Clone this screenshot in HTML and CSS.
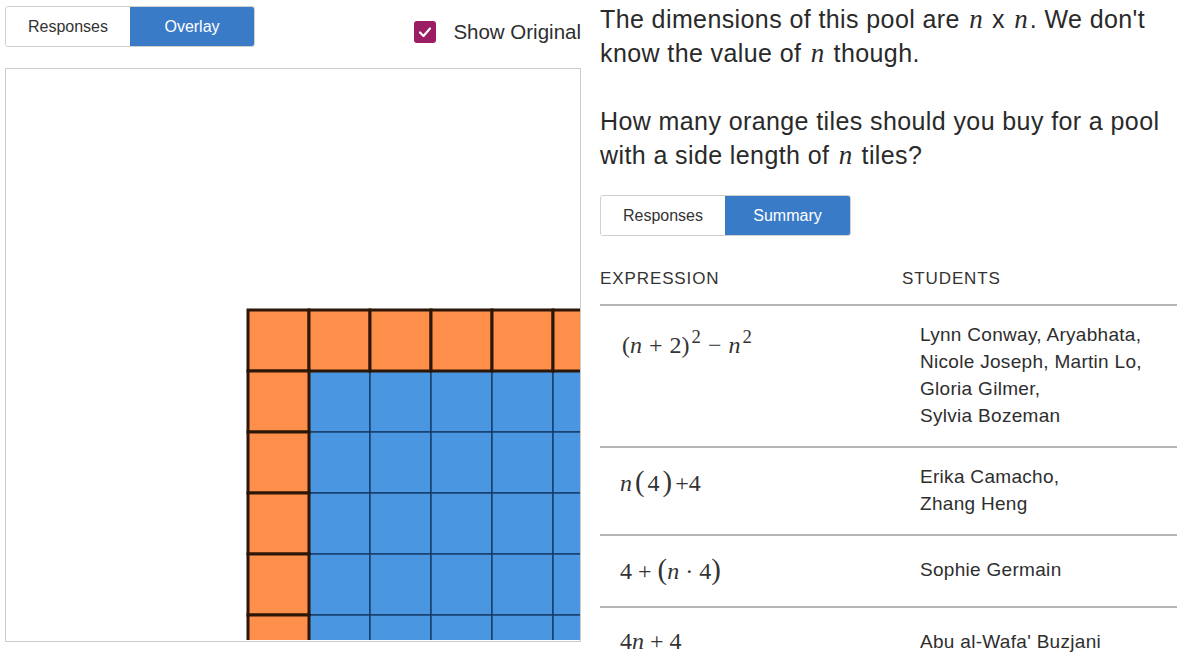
FILE: index.html
```html
<!DOCTYPE html>
<html lang="en">
<head>
<meta charset="utf-8">
<title>Pool tiles summary</title>
<link rel="stylesheet" href="styles.css">
</head>
<body>
<div class="page">
  <section class="left">
    <div class="toolbar">
      <div class="seg">
        <span class="seg-btn">Responses</span>
        <span class="seg-btn active">Overlay</span>
      </div>
      <label class="check">
        <svg class="check-box" width="22" height="22" viewBox="0 0 22 22"><rect x="0" y="0" width="22" height="22" rx="3" fill="#9b1d64"/><polyline points="6,11.5 9.5,15 16,7.5" fill="none" stroke="#fff" stroke-width="2.2" stroke-linecap="round" stroke-linejoin="round"/></svg>
        <span class="check-label">Show Original</span>
      </label>
    </div>
    <div class="canvas">
      <svg class="tiles" width="574" height="571" viewBox="0 0 574 571">
        <g class="blue" fill="#4a96e0" stroke="#163c68" stroke-width="1.4">
          <rect x="303" y="302" width="61" height="61"/><rect x="364" y="302" width="61" height="61"/><rect x="425" y="302" width="61" height="61"/><rect x="486" y="302" width="61" height="61"/><rect x="547" y="302" width="61" height="61"/>
          <rect x="303" y="363" width="61" height="61"/><rect x="364" y="363" width="61" height="61"/><rect x="425" y="363" width="61" height="61"/><rect x="486" y="363" width="61" height="61"/><rect x="547" y="363" width="61" height="61"/>
          <rect x="303" y="424" width="61" height="61"/><rect x="364" y="424" width="61" height="61"/><rect x="425" y="424" width="61" height="61"/><rect x="486" y="424" width="61" height="61"/><rect x="547" y="424" width="61" height="61"/>
          <rect x="303" y="485" width="61" height="61"/><rect x="364" y="485" width="61" height="61"/><rect x="425" y="485" width="61" height="61"/><rect x="486" y="485" width="61" height="61"/><rect x="547" y="485" width="61" height="61"/>
          <rect x="303" y="546" width="61" height="61"/><rect x="364" y="546" width="61" height="61"/><rect x="425" y="546" width="61" height="61"/><rect x="486" y="546" width="61" height="61"/><rect x="547" y="546" width="61" height="61"/>
        </g>
        <g class="orange" fill="#fd8f4b" stroke="#2b1607" stroke-width="3">
          <rect x="242" y="241" width="61" height="61"/><rect x="303" y="241" width="61" height="61"/><rect x="364" y="241" width="61" height="61"/><rect x="425" y="241" width="61" height="61"/><rect x="486" y="241" width="61" height="61"/><rect x="547" y="241" width="61" height="61"/>
          <rect x="242" y="302" width="61" height="61"/><rect x="242" y="363" width="61" height="61"/><rect x="242" y="424" width="61" height="61"/><rect x="242" y="485" width="61" height="61"/><rect x="242" y="546" width="61" height="61"/>
        </g>
      </svg>
    </div>
  </section>

  <section class="right">
    <p class="prompt">The dimensions of this pool are <span class="mi">n</span> x <span class="mi">n</span>. We don't know the value of <span class="mi">n</span> though.</p>
    <p class="prompt">How many orange tiles should you buy for a pool with a side length of <span class="mi">n</span> tiles?</p>

    <div class="seg seg-right">
      <span class="seg-btn">Responses</span>
      <span class="seg-btn active">Summary</span>
    </div>

    <div class="summary">
      <div class="sum-row sum-head">
        <div class="col-expr">EXPRESSION</div>
        <div class="col-students">STUDENTS</div>
      </div>
      <div class="sum-row">
        <div class="expr expr-sup">(<span class="mi">n</span><span class="op">+</span>2)<sup>2</sup><span class="op">−</span><span class="mi">n</span><sup>2</sup></div>
        <div class="names">Lynn Conway, Aryabhata,<br>Nicole Joseph, Martin Lo,<br>Gloria Gilmer,<br>Sylvia Bozeman</div>
      </div>
      <div class="sum-row">
        <div class="expr expr-paren"><span class="mi">n</span><span class="big">(</span>4<span class="big">)</span>+4</div>
        <div class="names">Erika Camacho,<br>Zhang Heng</div>
      </div>
      <div class="sum-row sum-single">
        <div class="expr expr-mid">4<span class="op">+</span><span class="big">(</span><span class="mi">n</span><span class="op">·</span>4<span class="big">)</span></div>
        <div class="names">Sophie Germain</div>
      </div>
      <div class="sum-row sum-single sum-last">
        <div class="expr expr-mid">4<span class="mi">n</span><span class="op">+</span>4</div>
        <div class="names">Abu al-Wafa' Buzjani</div>
      </div>
    </div>
  </section>
</div>
</body>
</html>
```

FILE: styles.css
```css
* { box-sizing: border-box; }

html, body {
  margin: 0;
  padding: 0;
  background: #fff;
  overflow: hidden;
}

body {
  font-family: "Liberation Sans", Arial, sans-serif;
  color: #2e2e2e;
  width: 1200px;
  height: 666px;
}

.page {
  display: flex;
  padding-left: 5px;
}

/* left panel */
.left {
  width: 576px;
  flex: none;
  display: flex;
  flex-direction: column;
}

.toolbar {
  display: flex;
  justify-content: space-between;
  align-items: flex-start;
  padding-top: 6px;
  height: 68px;
}

.seg {
  display: flex;
  height: 41px;
  border: 1px solid #cfcfcf;
  border-radius: 3px;
  overflow: hidden;
  width: 250px;
}

.seg-btn {
  flex: 1;
  display: flex;
  align-items: center;
  justify-content: center;
  font-size: 16px;
  color: #333;
  background: #fff;
}

.seg-btn.active {
  background: #3a7bc8;
  color: #fff;
}

.seg-btn:first-child { flex: 0 0 124px; }

.check {
  display: flex;
  align-items: center;
  gap: 17px;
  margin-top: 14px;
  margin-right: 0;
}

.check-box { display: block; flex: none; }

.check-label {
  font-size: 20.5px;
  color: #2e2e2e;
}

.canvas {
  width: 576px;
  height: 574px;
  border: 1px solid #cccccc;
  overflow: hidden;
}

.tiles { display: block; }

/* right panel */
.right {
  width: 577px;
  margin-left: 19px;
  flex: none;
}

.prompt {
  margin: 2px 0 34px;
  font-size: 25px;
  letter-spacing: 0.4px;
  line-height: 34px;
  color: #2a2a2a;
}

.prompt + .prompt { margin-bottom: 23px; }

.mi {
  font-family: "Liberation Serif", "Times New Roman", serif;
  font-style: italic;
  font-size: 1.08em;
}

.prompt .mi { margin: 0 2px; letter-spacing: 0; }

.seg-right { width: 251px; }
.seg-right .seg-btn:first-child { flex: 0 0 124px; }

.summary {
  margin-top: 31px;
}

.sum-row {
  display: grid;
  grid-template-columns: 302px 1fr;
  border-bottom: 2px solid #b5b5b5;
  padding: 15px 0 17px;
}

.sum-head {
  padding: 0 0 13px;
  font-size: 17px;
  letter-spacing: 0.9px;
  color: #333;
  line-height: 24px;
}

.names {
  padding-left: 18px;
  font-size: 19px;
  letter-spacing: 0.3px;
  line-height: 27px;
  color: #2e2e2e;
}

.expr {
  padding-left: 20px;
  font-family: "Liberation Serif", "Times New Roman", serif;
  font-size: 24px;
  line-height: 27px;
  color: #333;
  white-space: nowrap;
}

.expr .mi { font-size: 1em; }

.expr sup {
  font-size: 0.78em;
  vertical-align: 0.55em;
  line-height: 0;
  padding-left: 2px;
}

.expr .op { padding: 0 6px; }

.expr-sup { padding-top: 11px; padding-left: 22px; }
.expr-sup .op { padding: 0 7px; }
.expr-paren { padding-top: 5px; }
.expr-paren .big, .expr-mid .big { font-size: 1.2em; }
.expr-paren .big { padding: 0 3px; }
.expr-mid { padding-top: 0; }

.sum-single { padding: 20px 0 21px; }
.sum-last { border-bottom: none; }
```
